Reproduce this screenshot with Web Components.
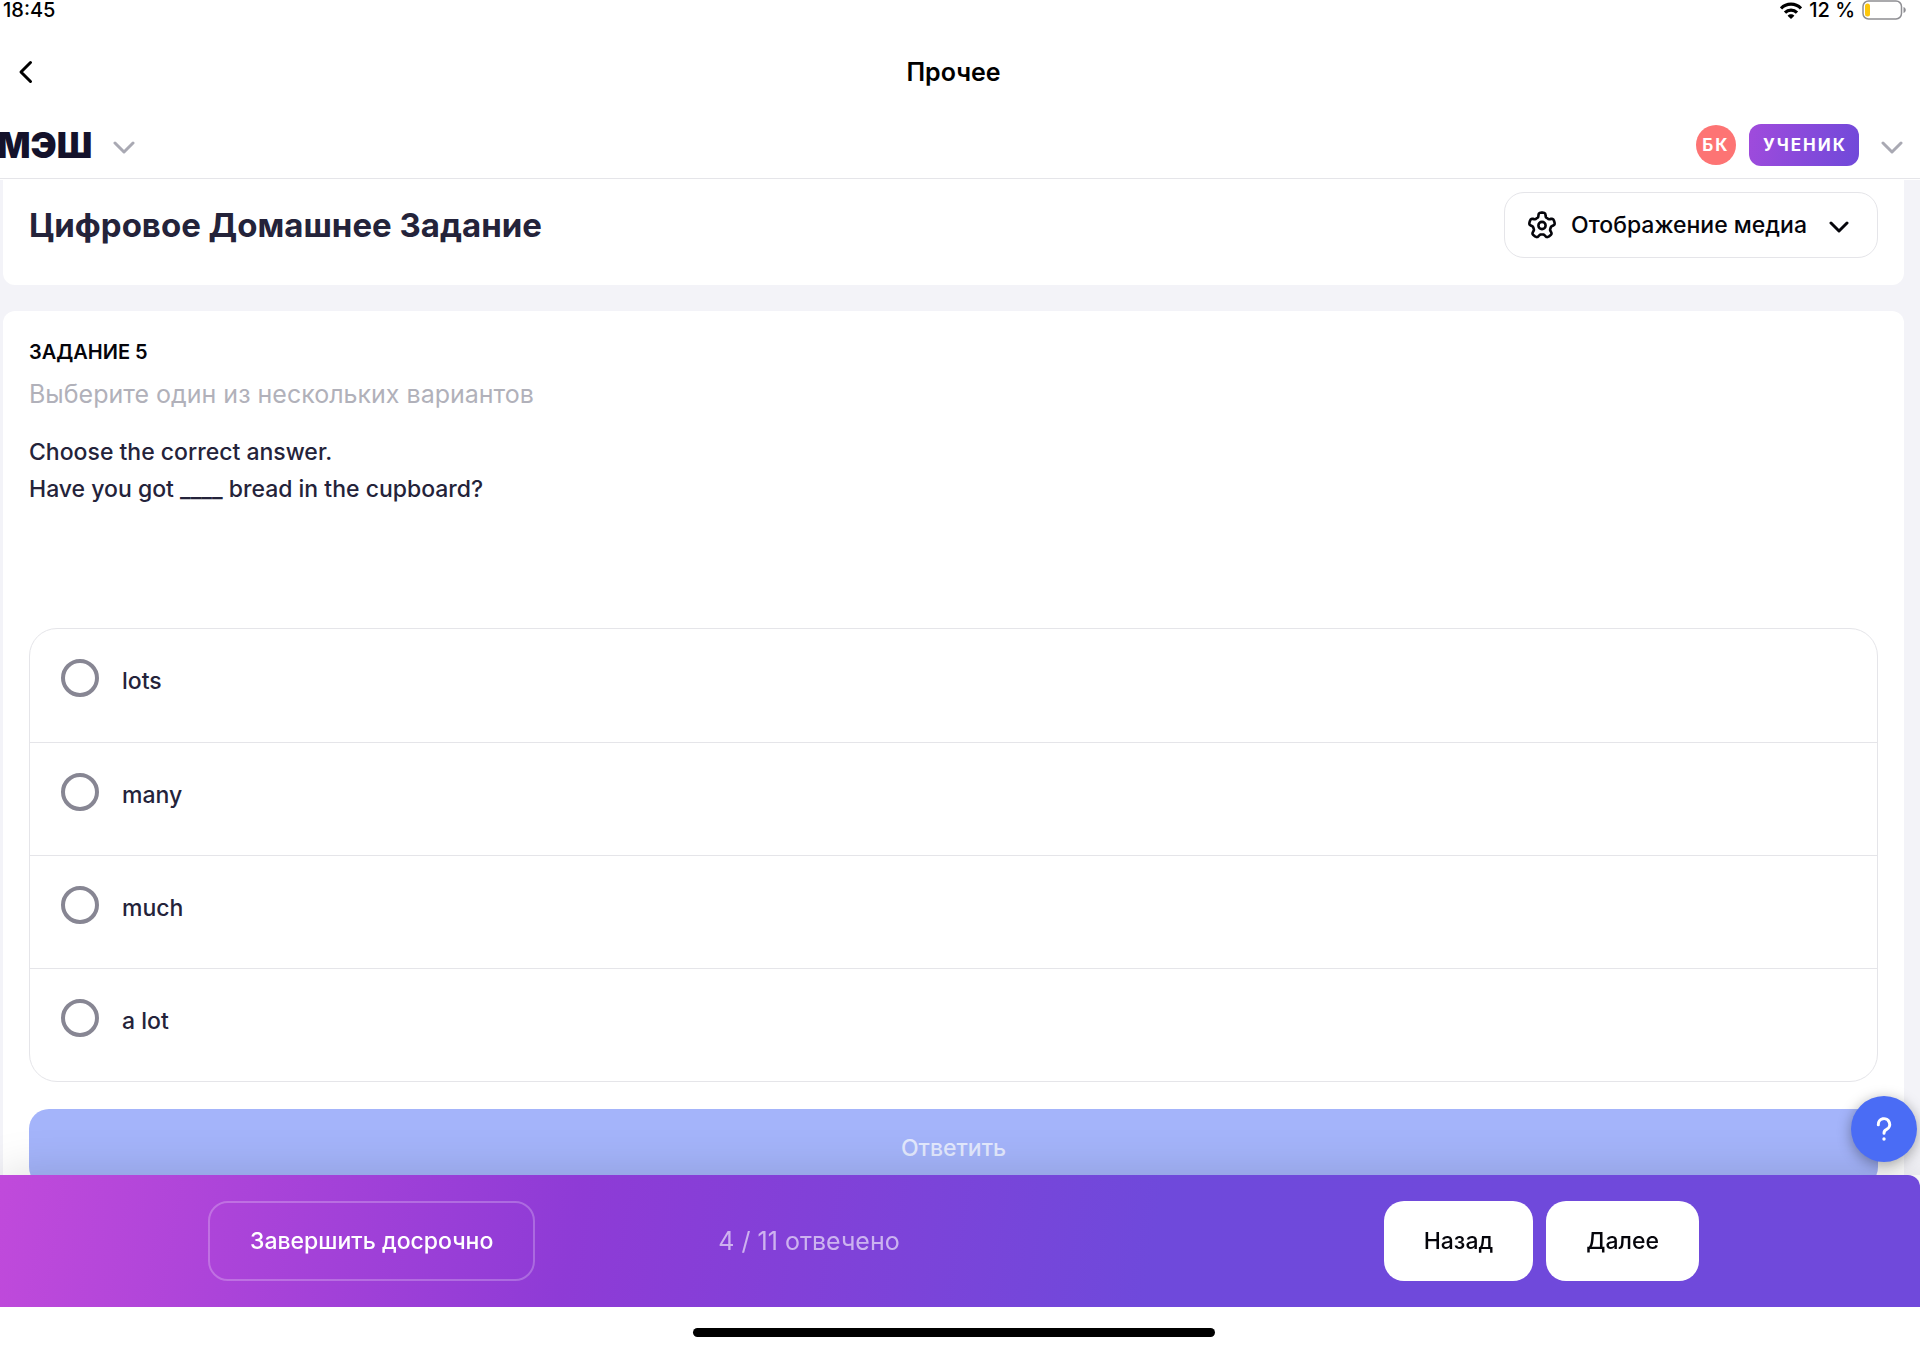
<!DOCTYPE html>
<html lang="ru">
<head>
<meta charset="utf-8">
<meta name="viewport" content="width=device-width, initial-scale=1">
<title>Прочее</title>
<style>
  html, body { margin: 0; height: 100%; }
  body {
    background: #fff;
    color: #05050b;
    font: 500 23px/36px Inter, "Noto Sans", "Liberation Sans", sans-serif;
    --line: #e5e5e9;
    --ink: #24233a;
    --page: #f3f3f8;
    --edge: 13px;
  }
</style>
</head>
<body>
<homework-app>
  <status-bar slot="top" time="18:45" charge="12 %"></status-bar>
  <screen-bar slot="top">Прочее</screen-bar>
  <site-header slot="top" initials="БК" role-name="УЧЕНИК">МЭШ</site-header>
  <title-card>Цифровое Домашнее Задание</title-card>
  <task-card>
    <span slot="number">ЗАДАНИЕ 5</span>
    <span slot="hint">Выберите один из нескольких вариантов</span>
    <span slot="question">Choose the correct answer.<br>Have you got ____ bread in the cupboard?</span>
    <answer-options values="lots|many|much|a lot"></answer-options>
  </task-card>
  <help-button slot="bottom"></help-button>
  <progress-footer slot="bottom">4 / 11 отвечено</progress-footer>
  <home-indicator slot="bottom"></home-indicator>
</homework-app>

<script>
const base = `
  :host, *, *::before { box-sizing: border-box; }
  button { font: inherit; color: inherit; background: none; border: 0; margin: 0; padding: 0; cursor: pointer; }
  svg { display: block; flex: none; }
`;

function define(name, css, html) {
  customElements.define(name, class extends HTMLElement {
    connectedCallback() {
      if (this.shadowRoot) return;
      const root = this.attachShadow({ mode: 'open' });
      const markup = typeof html === 'function' ? html(this) : html;
      root.innerHTML = `<style>${base}${css}</style>${markup}`;
    }
  });
}

const chevron = (w, h, stroke) => `
  <svg width="${w}" height="${h}" viewBox="0 0 ${w} ${h}" fill="none" stroke="currentColor" stroke-width="${stroke}" stroke-linecap="round" stroke-linejoin="round" aria-hidden="true">
    <path d="M2 2 L${w / 2} ${h - 2} L${w - 2} 2"/>
  </svg>`;

// Outline of a soft gear with five teeth, one pointing straight up.
function gearPath(cx, cy) {
  const points = [];
  for (let i = 0; i < 120; i++) {
    const a = i / 120 * 2 * Math.PI;
    const r = 10.9 + 2 * Math.tanh(2.4 * Math.cos(5 * a) + .2);
    points.push(`${(cx + r * Math.sin(a)).toFixed(2)} ${(cy - r * Math.cos(a)).toFixed(2)}`);
  }
  return `M${points.join(' L')} Z`;
}

define('homework-app', `
  :host { display: flex; flex-direction: column; height: 100vh; overflow: hidden; }
  main {
    flex: 1; min-height: 0; overflow: hidden auto; scrollbar-width: none;
    display: flex; flex-direction: column; gap: 26px;
    padding: 0 16px 0 3px; background: var(--page);
  }
  .bottom { position: relative; flex: none; }
`, `
  <slot name="top"></slot>
  <main><slot></slot></main>
  <div class="bottom"><slot name="bottom"></slot></div>
`);

define('status-bar', `
  :host { display: flex; flex: none; align-items: center; justify-content: space-between; height: 20px; padding: 0 var(--edge) 0 3px; color: #000; font-size: 20px; line-height: 20px; font-weight: 500; }
  .right { display: flex; align-items: center; gap: 7px; }
`, el => `
  <span>${el.getAttribute('time')}</span>
  <span class="right">
    <svg width="22" height="17" viewBox="0 0 22 17" fill="none" stroke="#000" stroke-width="3.2" aria-hidden="true">
      <path d="M1 6.4 C6.5 .8 15.5 .8 21 6.4"/>
      <path d="M5 10.6 C8.3 7.3 13.7 7.3 17 10.6"/>
      <path d="M11 17 L7.6 13.7 C9.5 11.9 12.5 11.9 14.4 13.7 Z" fill="#000" stroke="none"/>
    </svg>
    <span>${el.getAttribute('charge')}</span>
    <svg width="45" height="20" viewBox="0 0 45 20" fill="none" aria-hidden="true">
      <rect x="1" y="1" width="38.5" height="18" rx="5.5" stroke="#8e8e93" stroke-width="1.5"/>
      <rect x="3" y="3.5" width="5" height="13" rx="2.5" fill="#fdc70c"/>
      <path d="M41.5 7 C44.5 8 44.5 12 41.5 13 Z" fill="#8e8e93"/>
    </svg>
  </span>
`);

define('screen-bar', `
  :host { display: grid; flex: none; grid-template-columns: 44px 1fr 44px; align-items: center; height: 92px; padding: 12px var(--edge) 0 0; color: #000; }
  button { display: flex; align-items: center; height: 44px; padding-left: 18px; }
  h1 { margin: 0; text-align: center; font-size: 25px; line-height: 32px; font-weight: 600; }
`, `
  <button type="button" aria-label="Назад">
    <svg width="16" height="24" viewBox="0 0 16 24" fill="none" stroke="currentColor" stroke-width="3" stroke-linecap="round" stroke-linejoin="round"><path d="M12.5 2.5 L3 12 L12.5 21.5"/></svg>
  </button>
  <h1><slot></slot></h1>
`);

define('site-header', `
  :host { display: flex; flex: none; align-items: center; justify-content: space-between; height: 67px; padding-right: 17px; border-bottom: 1px solid var(--line); margin-bottom: 1px; }
  button { display: flex; align-items: center; color: #a9a9b3; }
  button > svg { margin-top: 4px; }
  .brand { gap: 21px; margin-left: -3px; }
  .name { color: #14122b; font-size: 35px; line-height: 40px; font-weight: 900; }
  .user { gap: 13px; }
  .avatar { display: grid; place-items: center; width: 40px; height: 40px; border-radius: 50%; background: #fd7474; }
  .avatar, .role { color: #fff; font-size: 17px; line-height: 24px; font-weight: 700; letter-spacing: 2px; }
  .role { padding: 9px 12px 9px 14px; border-radius: 12px; background: linear-gradient(105deg, #a04bdc, #6f49d9); margin-right: 9px; }
`, el => `
  <button type="button" class="brand"><span class="name"><slot></slot></span>${chevron(22, 13, 3)}</button>
  <button type="button" class="user">
    <span class="avatar">${el.getAttribute('initials')}</span>
    <span class="role">${el.getAttribute('role-name')}</span>
    ${chevron(22, 13, 3)}
  </button>
`);

define('title-card', `
  :host { display: flex; flex: none; align-items: center; justify-content: space-between; padding: 12px 26px 27px 26px; border-radius: 0 0 12px 12px; background: #fff; }
  h2 { margin: 0; color: var(--ink); font-size: 33px; line-height: 44px; font-weight: 700; }
  button { display: flex; align-items: center; gap: 14px; height: 66px; padding: 0 28px 0 22px; border: 1px solid var(--line); border-radius: 20px; }
  .arrow { padding: 4px 0 0 8px; }
`, `
  <h2><slot></slot></h2>
  <button type="button">
    <svg width="30" height="30" viewBox="0 0 30 30" fill="none" stroke="currentColor" stroke-width="2.6" stroke-linejoin="round" aria-hidden="true">
      <path d="${gearPath(15, 15.5)}"/>
      <circle cx="15" cy="15.5" r="3.6"/>
    </svg>
    <span>Отображение медиа</span>
    <span class="arrow">${chevron(20, 12, 3)}</span>
  </button>
`);

define('task-card', `
  :host { display: block; flex: none; padding: 28px 26px 24px 26px; border-radius: 12px; background: #fff; }
  h3, p { margin: 0; }
  h3 { font-size: 20px; line-height: 27px; font-weight: 600; }
  .hint { margin-top: 10px; color: #b1b1ba; font-size: 25px; font-weight: 400; }
  .question { margin: 22px 0 120px; color: var(--ink); line-height: 37px; }
  button { display: block; width: 100%; height: 78px; margin-top: 27px; border-radius: 20px; background: #a4b4fa; color: #e3e9fd; }
`, `
  <h3><slot name="number"></slot></h3>
  <p class="hint"><slot name="hint"></slot></p>
  <p class="question"><slot name="question"></slot></p>
  <slot></slot>
  <button type="button" disabled>Ответить</button>
`);

define('answer-options', `
  :host { display: block; color: var(--ink); }
  fieldset { margin: 0; padding: 0; border: 1px solid var(--line); border-radius: 28px; min-width: 0; }
  label { display: flex; align-items: flex-start; gap: 23px; height: 113px; padding: 30px 31px; cursor: pointer; }
  label + label { border-top: 1px solid var(--line); }
  input { appearance: none; flex: none; width: 38px; height: 38px; margin: 0; border: 4px solid #878693; border-radius: 50%; }
  input:checked { border-width: 11px; border-color: #4a6cf5; }
  span { padding-top: 4px; }
`, el => `
  <fieldset aria-label="Варианты ответа">
    ${el.getAttribute('values').split('|').map((v, i) =>
      `<label for="o${i}"><input type="radio" name="answer" id="o${i}" value="${v}"><span>${v}</span></label>`).join('')}
  </fieldset>
`);

define('help-button', `
  :host { position: absolute; z-index: 2; right: 3px; top: -79px; }
  button { display: grid; place-items: center; width: 66px; height: 66px; border-radius: 50%; background: #4a6cf5; box-shadow: 0 3px 14px rgba(0, 0, 0, .35); color: #fff; }
`, `
  <button type="button" aria-label="Помощь">
    <svg width="20" height="26" viewBox="0 0 20 26" fill="none" stroke="currentColor" stroke-width="3" stroke-linecap="round" aria-hidden="true">
      <path d="M4.3 8.8 A5.7 5.7 0 1 1 12.6 13.4 Q10 14.6 10 17.2"/>
      <circle cx="10" cy="23" r="1.7" fill="currentColor" stroke="none"/>
    </svg>
  </button>
`);

define('progress-footer', `
  :host {
    position: relative; display: grid; grid-template-columns: repeat(3, 1fr); gap: 40px; align-items: center;
    height: 132px; padding: 0 221px 0 208px; border-radius: 0 12px 0 0;
    background: linear-gradient(100deg, #c04adb 0%, #8e3bd6 30%, #6f49db 60%, #7049db 100%);
    box-shadow: 0 0 48px rgba(0, 0, 0, .15);
  }
  button { height: 80px; padding: 0 40px; border-radius: 20px; }
  .finish { justify-self: start; border: 2px solid rgba(255, 255, 255, .24); color: #fff; }
  .count { color: rgba(255, 255, 255, .6); font-size: 25px; font-weight: 400; }
  .moves { display: flex; justify-content: flex-end; gap: 13px; }
  .moves button { background: #fff; }
`, `
  <button type="button" class="finish">Завершить досрочно</button>
  <span class="count"><slot></slot></span>
  <span class="moves"><button type="button">Назад</button><button type="button">Далее</button></span>
`);

define('home-indicator', `
  :host { position: relative; display: flex; justify-content: center; height: 41px; padding: 21px var(--edge) 0 0; background: #fff; }
  div { width: 522px; height: 9px; border-radius: 5px; background: #000; }
`, `<div></div>`);
</script>
</body>
</html>
